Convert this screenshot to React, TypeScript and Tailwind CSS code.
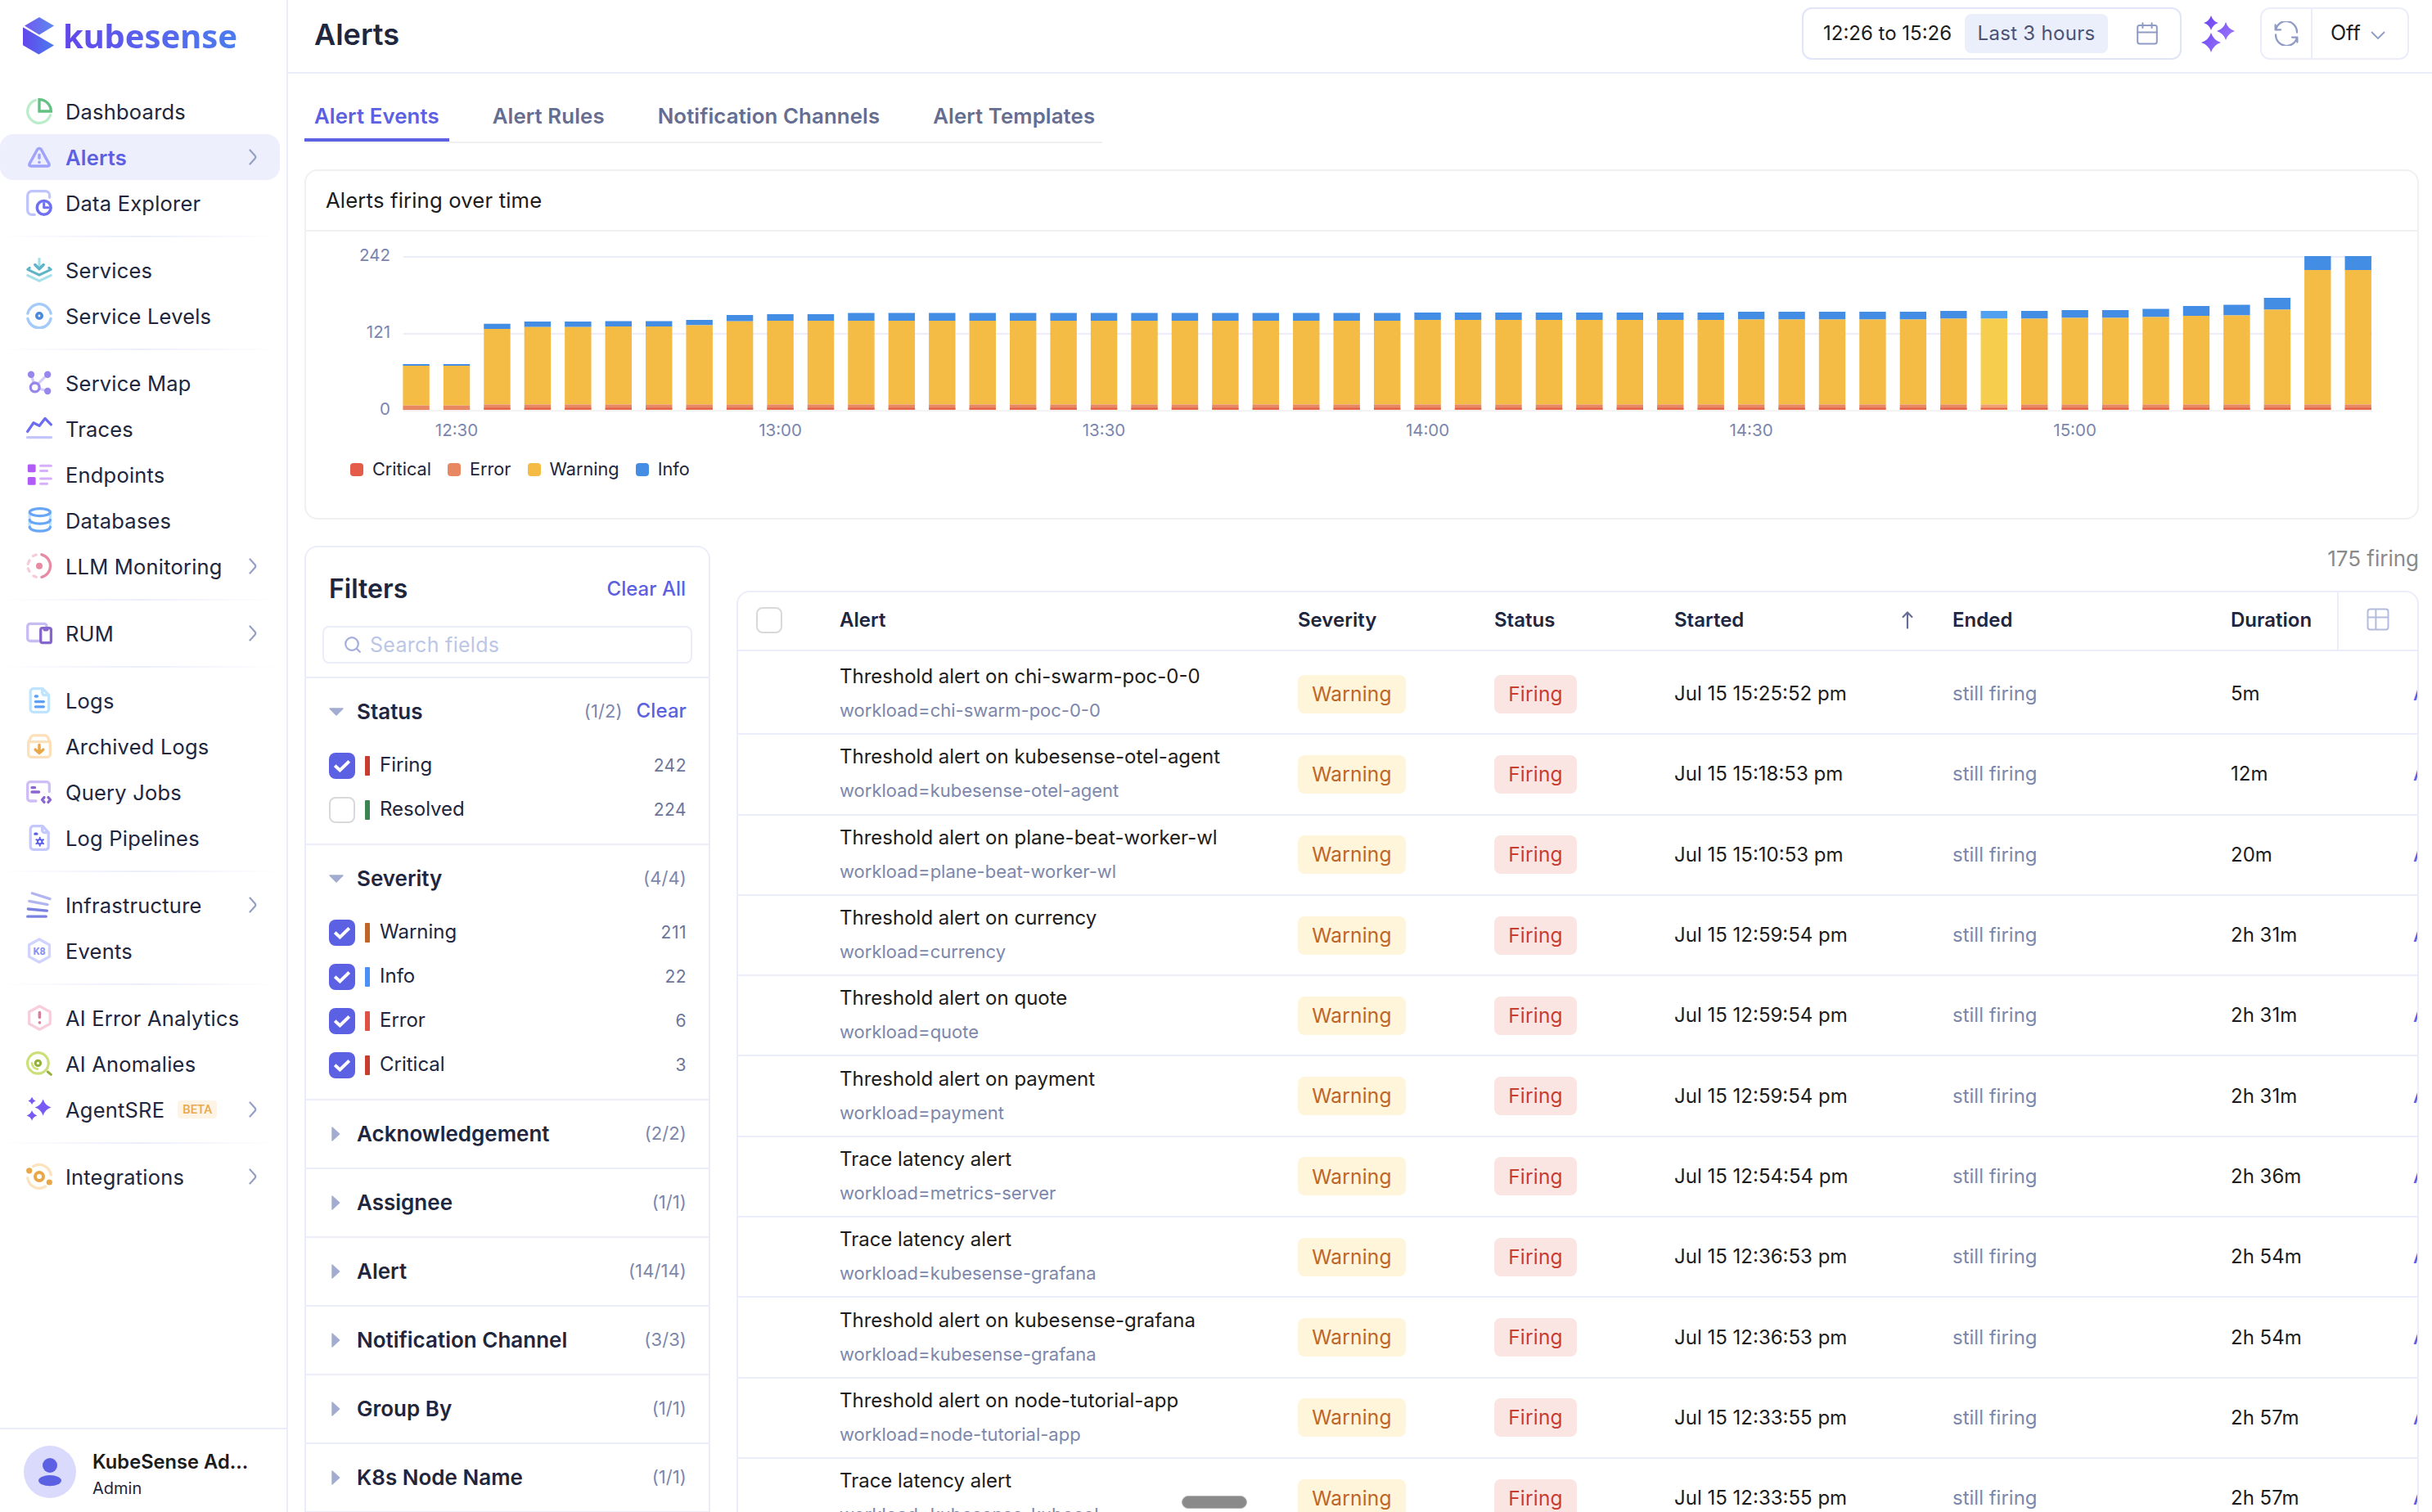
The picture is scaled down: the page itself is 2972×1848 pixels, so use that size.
import type { ReactNode } from "react";
import clsx from "clsx";

type NavItem = {
  label: string;
  icon: ReactNode;
  arrow?: boolean;
  active?: boolean;
  badge?: string;
};

/* ---------- icons ---------- */

function Glyph({ children }: { children: ReactNode }) {
  return (
    <svg
      viewBox="0 0 32 32"
      className="size-8 shrink-0"
      fill="none"
      strokeWidth={3.3}
      strokeLinecap="round"
      strokeLinejoin="round"
    >
      {children}
    </svg>
  );
}

const star = (x: number, y: number, r: number) => {
  const k = r * 0.24;
  return `M${x} ${y - r}Q${x + k} ${y - k} ${x + r} ${y}Q${x + k} ${y + k} ${x} ${y + r}Q${x - k} ${y + k} ${x - r} ${y}Q${x - k} ${y - k} ${x} ${y - r}Z`;
};

const icons = {
  dashboards: (
    <Glyph>
      <path d="M11.3 2.5A14.3 14.3 0 1 0 29.5 20.8" stroke="#bbedca" />
      <path d="M16 1.7V16H30.3A14.3 14.3 0 0 0 16 1.7Z" stroke="#62c083" strokeLinejoin="miter" />
    </Glyph>
  ),
  alerts: (
    <Glyph>
      <path
        d="M13.7 6.6 4 24.4C3.3 25.8 4 27 5.6 27H26.4C28 27 28.7 25.8 28 24.4L18.3 6.6C17.3 5 14.7 5 13.7 6.6Z"
        stroke="#9fa3fb"
        strokeWidth={3.4}
      />
      <path d="M16 13.3V17.3M16 22.3V22.4" stroke="#9fa3fb" strokeWidth={3.6} />
    </Glyph>
  ),
  explorer: (
    <Glyph>
      <path d="M10.3 30.3H7A5.3 5.3 0 0 1 1.7 25V7A5.3 5.3 0 0 1 7 1.7H23.3A5.3 5.3 0 0 1 28.6 7V9.3" stroke="#c0c4fd" />
      <circle cx="21.7" cy="21.8" r="8.4" stroke="#6e70f0" strokeWidth={3.5} />
      <path d="M21.7 16.5V21.8H27" stroke="#6e70f0" strokeWidth={3} />
    </Glyph>
  ),
  services: (
    <Glyph>
      <path d="M16 2.4V11" stroke="#a6e0ea" />
      <path d="M1.8 22.6 16 29.3 30.2 22.6" stroke="#a6e0ea" strokeWidth={3} />
      <path d="M10.8 9.6 16 14.8 21.2 9.6" stroke="#5eb5c8" strokeWidth={3.5} />
      <path d="M4.2 13.4 1.8 15.4 16 22.2 30.2 15.4 27.8 13.4" stroke="#5eb5c8" strokeWidth={3} />
    </Glyph>
  ),
  levels: (
    <Glyph>
      <path d="M1.9 13.2A14.4 14.4 0 0 1 30.1 13.2M1.9 19.4A14.4 14.4 0 0 0 30.1 19.4" stroke="#a3caf8" />
      <circle cx="16" cy="16" r="3.2" stroke="#4b89db" strokeWidth={3.6} />
    </Glyph>
  ),
  map: (
    <Glyph>
      <path d="M6 5.7 9 15M26 5.7 14.5 17.2M26 26 16 23" stroke="#d3cdfa" />
      <g fill="#9787ec">
        <circle cx="6" cy="5.8" r="4.2" />
        <circle cx="26.2" cy="5.8" r="4.2" />
        <circle cx="26.2" cy="26" r="4.2" />
      </g>
      <circle cx="10.7" cy="21.4" r="5.4" stroke="#9787ec" fill="#fff" />
    </Glyph>
  ),
  traces: (
    <Glyph>
      <path d="M1.7 19.4 9 8.8 16 12.4 23 3.4 30.3 10.8" stroke="#6c6df0" />
      <path d="M1.6 26.7H30.4" stroke="#c3c6fc" />
    </Glyph>
  ),
  endpoints: (
    <Glyph>
      <rect x="1.8" y="3.4" width="9.8" height="9.8" rx="1.6" fill="#b15cf7" />
      <rect x="1.8" y="19" width="9.8" height="9.8" rx="1.6" fill="#b15cf7" />
      <path d="M17.5 5.2H30.4M17.5 11.4H25.6M17.5 20.9H30.4M17.5 27.3H25.6" stroke="#d7aefb" strokeWidth={3} />
    </Glyph>
  ),
  databases: (
    <Glyph>
      <path d="M4.2 6V25M29.4 6V25" stroke="#c0e3fd" strokeLinecap="butt" />
      <ellipse cx="16.8" cy="6.1" rx="12.5" ry="4.5" stroke="#68a6f8" />
      <path d="M4.3 15.4C4.3 18 10 20.1 16.8 20.1S29.3 18 29.3 15.4M4.3 24.2C4.3 27 10 29.1 16.8 29.1S29.3 27 29.3 24.2" stroke="#68a6f8" />
    </Glyph>
  ),
  llm: (
    <Glyph>
      <path d="M19 1.8A14.3 14.3 0 0 1 19 29.4" stroke="#e78aa3" />
      <path d="M12.2 2 8.5 3.6M4 9 2.2 13.2M2.4 19 4 22.4M9 27.9 12.3 29.2" stroke="#f7ccd9" />
      <circle cx="16" cy="15.8" r="4" fill="#e78aa3" />
    </Glyph>
  ),
  rum: (
    <Glyph>
      <path d="M25 8V7.5A3.2 3.2 0 0 0 21.8 4.3H5A3.3 3.3 0 0 0 1.7 7.6V22.2A3.3 3.3 0 0 0 5 25.5H15" stroke="#c8bcf4" />
      <rect x="17.7" y="9.7" width="12.7" height="18" rx="2.4" stroke="#8566cc" fill="#fff" />
      <path d="M22.7 11.4H25.4" stroke="#8566cc" strokeWidth={4} />
    </Glyph>
  ),
  logs: (
    <Glyph>
      <path d="M20 1.7H9A3.6 3.6 0 0 0 5.2 5.3V26.7A3.6 3.6 0 0 0 9 30.3H24A3.6 3.6 0 0 0 27.6 26.7V9.4L20 1.7ZM19.6 2V6.6A3 3 0 0 0 22.6 9.6H27" stroke="#c0e4fd" />
      <path d="M11.4 11H13.4M11.4 17.6H21.4M11.4 23.8H21.4" stroke="#5c9ff6" />
    </Glyph>
  ),
  archived: (
    <Glyph>
      <path d="M3 10.4 6 4.6A3 3 0 0 1 8.6 2.8H23.4A3 3 0 0 1 26 4.6L29 10.4M2.7 10.6H29.3V26A3.3 3.3 0 0 1 26 29.3H6A3.3 3.3 0 0 1 2.7 26Z" stroke="#fce0b9" />
      <path d="M16 14.4V24M11.2 20.2 16 24.4 20.8 20.2" stroke="#e8a748" strokeWidth={3.5} />
    </Glyph>
  ),
  query: (
    <Glyph>
      <path d="M12 27H5A3.3 3.3 0 0 1 1.7 23.7V7A3.3 3.3 0 0 1 5 3.7H25A3.3 3.3 0 0 1 28.3 7V15.6" stroke="#cfbdf8" />
      <path d="M7 10.6H10.6M7 16H15.6" stroke="#8a66d0" />
      <path d="M22 22.6 19.5 25.5 22 28.4M27 22.6 29.5 25.5 27 28.4" stroke="#8a66d0" />
    </Glyph>
  ),
  pipelines: (
    <Glyph>
      <path d="M20 1.7H9A3.6 3.6 0 0 0 5.2 5.3V26.7A3.6 3.6 0 0 0 9 30.3H24A3.6 3.6 0 0 0 27.2 26.7V9.4L20 1.7ZM19.6 2V6.6A3 3 0 0 0 22.6 9.6H27" stroke="#c5c8fd" />
      <path d="M11 11.2H12.8" stroke="#5b5fe6" />
      <path d="M16.7 15.8V18M16.7 23.4V25.8M12.4 18.2 14.4 19.4M19 22 21 23.2M12.4 23.2 14.4 22M19 19.4 21 18.2" stroke="#5b5fe6" strokeWidth={2} />
      <circle cx="16.7" cy="20.8" r="2.8" stroke="#5b5fe6" strokeWidth={2} />
    </Glyph>
  ),
  infra: (
    <Glyph>
      <path d="M7.4 1.8 29 8.6M3.8 11.4 26 15.6" stroke="#b1b6f0" />
      <path d="M2.3 21 25.4 23.2M1.7 30.2H24.3" stroke="#7a82e2" />
    </Glyph>
  ),
  events: (
    <Glyph>
      <path d="M16 2 28.4 8.8V23.2L16 30 3.6 23.2V8.8Z" stroke="#cfd3fd" />
      <text x="16" y="20.6" fontSize="12.5" fontWeight="700" textAnchor="middle" fill="#8a90f3" className="font-['Roboto',sans-serif]">
        K8
      </text>
    </Glyph>
  ),
  aiError: (
    <Glyph>
      <path d="M16.4 1.8 29.2 8.8V23.2L16.4 30.2 3.6 23.2V8.8Z" stroke="#f7cedb" />
      <path d="M16.4 9.6V15.4M16.4 21.8V22" stroke="#e07a96" strokeWidth={3.6} />
    </Glyph>
  ),
  anomalies: (
    <Glyph>
      <circle cx="14.4" cy="15.4" r="12.8" stroke="#cbe07a" strokeWidth={3.2} />
      <path d="M7 15.4A7.4 7.4 0 0 0 14 22.6" stroke="#cbe07a" strokeWidth={2.6} />
      <circle cx="14.4" cy="15.4" r="3.2" stroke="#94b13d" strokeWidth={3} />
      <path d="M26.4 26 30.3 29.3" stroke="#94b13d" strokeWidth={3} />
    </Glyph>
  ),
  agent: (
    <Glyph>
      <path d={`${star(7, 5.4, 4.6)}${star(20.6, 13.6, 10)}${star(7, 23.4, 6.3)}`} fill="#7a5af5" />
    </Glyph>
  ),
  integrations: (
    <Glyph>
      <path d="M8.6 3.6A14.3 14.3 0 0 1 30.2 14M1.8 18A14.3 14.3 0 0 0 23.6 28" stroke="#fce2bd" />
      <circle cx="16" cy="16" r="5" stroke="#e8a748" strokeWidth={4} />
      <circle cx="3.7" cy="8.8" r="3.6" fill="#e8a748" />
      <circle cx="28.3" cy="23" r="3.6" fill="#e8a748" />
    </Glyph>
  ),
};

const navGroups: NavItem[][] = [
  [
    { label: "Dashboards", icon: icons.dashboards },
    { label: "Alerts", icon: icons.alerts, arrow: true, active: true },
    { label: "Data Explorer", icon: icons.explorer },
  ],
  [
    { label: "Services", icon: icons.services },
    { label: "Service Levels", icon: icons.levels },
  ],
  [
    { label: "Service Map", icon: icons.map },
    { label: "Traces", icon: icons.traces },
    { label: "Endpoints", icon: icons.endpoints },
    { label: "Databases", icon: icons.databases },
    { label: "LLM Monitoring", icon: icons.llm, arrow: true },
  ],
  [{ label: "RUM", icon: icons.rum, arrow: true }],
  [
    { label: "Logs", icon: icons.logs },
    { label: "Archived Logs", icon: icons.archived },
    { label: "Query Jobs", icon: icons.query },
    { label: "Log Pipelines", icon: icons.pipelines },
  ],
  [
    { label: "Infrastructure", icon: icons.infra, arrow: true },
    { label: "Events", icon: icons.events },
  ],
  [
    { label: "AI Error Analytics", icon: icons.aiError },
    { label: "AI Anomalies", icon: icons.anomalies },
    { label: "AgentSRE", icon: icons.agent, arrow: true, badge: "BETA" },
  ],
  [{ label: "Integrations", icon: icons.integrations, arrow: true }],
];

/* ---------- sidebar ---------- */

function Logo() {
  return (
    <div className="flex h-[108px] items-start gap-[11px] pl-7 pt-5">
      <svg viewBox="0 0 38 46" className="mt-px h-[46px] w-[38px]">
        <defs>
          <linearGradient id="logo" x1="0" x2="1">
            <stop offset="0" stopColor="#6246ec" />
            <stop offset="1" stopColor="#4a7cee" />
          </linearGradient>
        </defs>
        <path d="M2 10.4 20 0 38 10.6 20 21.4Z" fill="url(#logo)" opacity="0.9" />
        <path d="M0 12.2 38 34.6 19.4 45.4 0 34.2Z" fill="url(#logo)" />
      </svg>
      <span className="bg-gradient-to-r from-[#6246ec] to-[#4a7cee] bg-clip-text font-['Noto_Sans',sans-serif] text-[40px] leading-[48px] font-bold tracking-[-0.1px] text-transparent">
        kubesense
      </span>
    </div>
  );
}

function NavRow({ label, icon, arrow, active, badge }: NavItem) {
  return (
    <a
      href="#"
      className={clsx(
        "mr-2 flex h-14 items-center rounded-2xl pl-8 pr-7",
        active ? "bg-[#eeeffd] font-semibold text-[#5c60e2]" : "text-[#20263d]"
      )}
    >
      {icon}
      <span className="ml-4 whitespace-nowrap pt-[3px] text-[25.5px] tracking-[0.2px]">{label}</span>
      {badge && (
        <span className="ml-4 flex h-[22px] w-12 items-center justify-center rounded-sm bg-[#fef4e6] font-['Roboto',sans-serif] text-[15px] font-medium tracking-[-0.2px] text-[#e9a84c]">
          {badge}
        </span>
      )}
      {arrow && (
        <svg viewBox="0 0 10 20" className="ml-auto h-5 w-2.5" fill="none" stroke="#94a0c4" strokeWidth={2.2} strokeLinecap="round">
          <path d="M1.5 1.5 7.6 8.3Q9 10 7.6 11.7L1.5 18.5" />
        </svg>
      )}
    </a>
  );
}

function Sidebar() {
  return (
    <aside className="flex w-[352px] shrink-0 flex-col border-r-2 border-[#ebedfb]">
      <Logo />
      <nav className="flex-1">
        {navGroups.map((group, i) => (
          <div key={i}>
            {i > 0 && <div className="my-3 mr-2 h-0.5 bg-gradient-to-r from-transparent via-[#eceefb] to-transparent" />}
            {group.map((item) => (
              <NavRow key={item.label} {...item} />
            ))}
          </div>
        ))}
      </nav>
      <div className="flex h-[103px] items-start gap-5 border-t-2 border-[#ebedfb] pl-[29px] pt-5">
        <svg viewBox="0 0 64 64" className="size-16">
          <circle cx="32" cy="32" r="32" fill="#dadafc" />
          <circle cx="32" cy="24" r="9" fill="#5c60e2" />
          <ellipse cx="32" cy="42.6" rx="14" ry="6.6" fill="#5c60e2" />
        </svg>
        <div className="pt-1">
          <div className="text-[23.7px] leading-[32px] font-semibold text-[#1c1c1c]">KubeSense Ad...</div>
          <div className="text-[20px] leading-[32px] text-[#20263d]">Admin</div>
        </div>
      </div>
    </aside>
  );
}

/* ---------- top bar ---------- */

function TopBar() {
  return (
    <header className="flex h-[90px] shrink-0 items-start border-b-2 border-[#ebedfb] pl-8 pr-7 pt-[9px]">
      <h1 className="pt-px text-[36px] leading-[64px] font-semibold text-[#20263d]">Alerts</h1>
      <div className="ml-auto flex h-16 w-[464px] items-center rounded-xl border-2 border-[#e0e5f8] pl-6 pr-[27px]">
        <span className="w-[173px] whitespace-nowrap text-[24px] text-[#1c1c1c]">12:26 to 15:26</span>
        <span className="flex h-12 w-[175px] items-center justify-center rounded-lg bg-[#ebeefb] text-[24px] tracking-[0.3px] text-[#4b5375]">
          Last 3 hours
        </span>
        <svg viewBox="0 0 26 28" className="ml-auto h-7 w-[26px]" fill="none" stroke="#8f9bc4" strokeWidth={2} strokeLinecap="round">
          <rect x="1.2" y="4" width="23.6" height="22.4" rx="2.4" />
          <path d="M1.2 12.6H24.8M7.4 1.2V7M18.6 1.2V7" />
        </svg>
      </div>
      <svg viewBox="0 0 42 46" className="ml-6 mt-[9px] h-[46px] w-[42px]">
        <defs>
          <linearGradient id="spark" x1="0" x2="1" y1="0.2" y2="0.8">
            <stop offset="0" stopColor="#6c45ee" />
            <stop offset="1" stopColor="#9f7bff" />
          </linearGradient>
        </defs>
        <path d={`${star(12, 10, 9)}${star(30, 20, 11)}${star(12, 34, 12)}`} fill="url(#spark)" />
      </svg>
      <div className="ml-[30px] flex h-16 w-[182px] rounded-xl border-2 border-[#ebedfb]">
        <div className="flex w-[62px] items-center justify-center border-r-2 border-[#ebedfb]">
          <svg viewBox="0 0 30 30" className="size-[30px]" fill="none" stroke="#8f9bc4" strokeWidth={2.2} strokeLinecap="round" strokeLinejoin="round">
            <path d="M1.6 4.4V10.4H8M2 10A13.2 13.2 0 0 1 28 13.6M28.4 25.6V19.6H22M28 20A13.2 13.2 0 0 1 2 16.4" />
          </svg>
        </div>
        <div className="flex flex-1 items-center gap-3 pl-[22px] text-[25px] text-[#1c1c1c]">
          Off
          <svg viewBox="0 0 18 10" className="mt-1 h-2.5 w-[18px]" fill="none" stroke="#8f9bc4" strokeWidth={1.8}>
            <path d="M1 1 9 9 17 1" />
          </svg>
        </div>
      </div>
    </header>
  );
}

const tabs = ["Alert Events", "Alert Rules", "Notification Channels", "Alert Templates"];

function Tabs() {
  return (
    <div className="flex h-[65px] w-[975px] gap-[41px] border-b-2 border-[#f0f0f0]">
      {tabs.map((tab, i) => (
        <button
          key={tab}
          className={clsx(
            "h-[63px] whitespace-nowrap border-b-4 px-3 pt-[5px] text-[25.8px] font-semibold tracking-[0.1px]",
            i === 0 ? "border-[#5c60e2] text-[#5c60e2]" : "border-transparent text-[#656e91]"
          )}
        >
          {tab}
        </button>
      ))}
    </div>
  );
}

/* ---------- chart ---------- */

const BASE = 501;
const PITCH = 49.44;

// pixel position of the top of the stack and of the warning segment
const bars: [number, number][] = [
  [445, 447], [445, 447], [395.7, 402], [393, 399.7], [393, 399.7], [392.5, 399], [392.5, 399],
  [391, 397.5], [385, 392.7], [384, 392], [384, 392], [382.5, 392],
  ...Array.from({ length: 13 }, (): [number, number] => [382.5, 392]),
  ...Array.from({ length: 8 }, (): [number, number] => [382, 391]),
  ...Array.from({ length: 5 }, (): [number, number] => [381, 390.5]),
  [380, 389.5], [380, 389.5], [380, 389.5], [379, 388.5], [379, 388.5], [377.5, 387.5],
  [374, 386], [372.5, 385.5], [364, 378.5], [313, 330], [313, 330],
];

const ticks = ["12:30", "13:00", "13:30", "14:00", "14:30", "15:00"];

const legend = [
  { label: "Critical", color: "bg-[#e45b49]" },
  { label: "Error", color: "bg-[#e88862]" },
  { label: "Warning", color: "bg-[#f4bb45]" },
  { label: "Info", color: "bg-[#438ee4]" },
];

function AlertsChart() {
  return (
    <section className="h-[428px] rounded-2xl border-2 border-[#f0f0f0]">
      <h2 className="flex h-[74px] items-center border-b-2 border-[#f0f0f0] pl-6 text-[25.7px] tracking-[0.15px] text-[#1c1c1c]">
        Alerts firing over time
      </h2>
      <svg viewBox="374 283 2580 265" className="h-[265px] w-full">
        <path d="M493 314H2899M493 408H2899" stroke="#ebedfb" strokeWidth={2} />
        <path d="M493 502H2899" stroke="#f3f3f3" strokeWidth={2} />
        {bars.map(([top, warn], i) => {
          const x = 492.4 + i * PITCH;
          const short = i < 2;
          const err = short ? 495.6 : 494.4;
          const hot = i === 39;
          return (
            <g key={i}>
              <rect x={x} y={top} width={32.4} height={warn - top} fill={hot ? "#52a0f0" : "#438ee4"} />
              <rect x={x} y={warn} width={32.4} height={err - warn} fill={hot ? "#f6cd4c" : "#f4bb45"} />
              <rect x={x} y={err} width={32.4} height={BASE - err} fill={hot ? "#f0a070" : "#e88862"} />
              {!short && <rect x={x} y={498.6} width={32.4} height={1.6} fill="#e45b49" />}
            </g>
          );
        })}
        <g fontSize={20.5} fill="#7a86ae" className="font-['Inter',sans-serif]">
          <text x={477} y={319} textAnchor="end">242</text>
          <text x={477} y={413} textAnchor="end">121</text>
          <text x={477} y={507} textAnchor="end">0</text>
          {ticks.map((t, i) => (
            <text key={t} x={558 + i * 8 * PITCH} y={533} textAnchor="middle">
              {t}
            </text>
          ))}
        </g>
      </svg>
      <div className="flex gap-5 pl-[54px] pt-[11px]">
        {legend.map((l) => (
          <span key={l.label} className="flex items-center gap-[11px] text-[21.7px] leading-[28px] text-[#20263d]">
            <i className={clsx("mt-0.5 size-4 rounded", l.color)} />
            {l.label}
          </span>
        ))}
      </div>
    </section>
  );
}

/* ---------- filters ---------- */

type Option = { label: string; count: number; color: string; checked?: boolean };

const statusOptions: Option[] = [
  { label: "Firing", count: 242, color: "bg-[#c73d30]", checked: true },
  { label: "Resolved", count: 224, color: "bg-[#3a8551]" },
];

const severityOptions: Option[] = [
  { label: "Warning", count: 211, color: "bg-[#bf6627]", checked: true },
  { label: "Info", count: 22, color: "bg-[#4a90f5]", checked: true },
  { label: "Error", count: 6, color: "bg-[#dd5245]", checked: true },
  { label: "Critical", count: 3, color: "bg-[#c73d30]", checked: true },
];

const collapsed = [
  ["Acknowledgement", "(2/2)"],
  ["Assignee", "(1/1)"],
  ["Alert", "(14/14)"],
  ["Notification Channel", "(3/3)"],
  ["Group By", "(1/1)"],
  ["K8s Node Name", "(1/1)"],
];

function Checkbox({ checked }: { checked?: boolean }) {
  if (!checked) return <span className="size-8 shrink-0 rounded-lg border-2 border-[#d9d9d9] bg-white" />;
  return (
    <span className="flex size-8 shrink-0 items-center justify-center rounded-lg bg-[#5c60e2]">
      <svg viewBox="0 0 20 16" className="h-4 w-5" fill="none" stroke="#fff" strokeWidth={4}>
        <path d="M1.2 7.6 7.4 13.4 18.8 2.4" />
      </svg>
    </span>
  );
}

function SectionHead({ title, count, open, clear }: { title: string; count: string; open?: boolean; clear?: boolean }) {
  return (
    <div className={clsx("flex items-center pl-7 pr-[27px]", open ? "h-20 pt-0.5" : "h-[82px]")}>
      <svg viewBox="0 0 18 18" className="size-[18px]" fill="#a2acd1" stroke="#a2acd1" strokeWidth={1.4} strokeLinejoin="round">
        {open ? <path d="M1 5H17L9 13Z" /> : <path d="M4 1V17L12.6 9Z" />}
      </svg>
      <span className="ml-4 pb-0.5 text-[26px] font-semibold text-[#20263d]">{title}</span>
      <span className="ml-auto pb-0.5 text-[22px] tracking-[0.1px] text-[#7c87ac]">{count}</span>
      {clear && <span className="ml-[17px] pb-0.5 text-[24px] font-medium tracking-[0.1px] text-[#5c60e2]">Clear</span>}
    </div>
  );
}

function OptionRow({ label, count, color, checked }: Option) {
  return (
    <label className="flex h-[54px] items-center pl-7 pr-[27px]">
      <Checkbox checked={checked} />
      <i className={clsx("ml-3 h-6 w-1.5 rounded-[1px]", color)} />
      <span className="ml-3 pb-0.5 text-[24px] text-[#20263d]">{label}</span>
      <span className="ml-auto text-[21px] tracking-[0.5px] text-[#6c769b]">{count}</span>
    </label>
  );
}

function Filters() {
  return (
    <section className="flex h-[1200px] w-[496px] shrink-0 flex-col rounded-t-2xl border-2 border-[#ebedfb]">
      <div className="flex h-24 items-center justify-between pl-7 pr-7 pt-[5px]">
        <h2 className="text-[32px] font-semibold text-[#20263d]">Filters</h2>
        <span className="text-[24px] font-medium text-[#5c60e2]">Clear All</span>
      </div>
      <div className="mx-5 mb-4 flex h-[46px] shrink-0 items-center rounded-lg border-2 border-[#ebedfb] pl-[25px]">
        <svg viewBox="0 0 20 20" className="size-5" fill="none" stroke="#a3aedb" strokeWidth={2.2} strokeLinecap="round">
          <circle cx="9" cy="9" r="7.8" />
          <path d="M14.8 14.8 18.8 18.8" />
        </svg>
        <span className="ml-[11px] pt-0.5 text-[25px] tracking-[0.3px] text-[#bcc6e6]">Search fields</span>
      </div>
      <div className="border-y-2 border-[#ebedfb] pb-3.5">
        <SectionHead title="Status" count="(1/2)" open clear />
        {statusOptions.map((o) => (
          <OptionRow key={o.label} {...o} />
        ))}
      </div>
      <div className="border-b-2 border-[#ebedfb] pb-3.5">
        <SectionHead title="Severity" count="(4/4)" open />
        {severityOptions.map((o) => (
          <OptionRow key={o.label} {...o} />
        ))}
      </div>
      {collapsed.map(([title, count]) => (
        <div key={title} className="border-b-2 border-[#ebedfb]">
          <SectionHead title={title} count={count} />
        </div>
      ))}
    </section>
  );
}

/* ---------- table ---------- */

const alerts = [
  ["Threshold alert on chi-swarm-poc-0-0", "chi-swarm-poc-0-0", "15:25:52", "5m"],
  ["Threshold alert on kubesense-otel-agent", "kubesense-otel-agent", "15:18:53", "12m"],
  ["Threshold alert on plane-beat-worker-wl", "plane-beat-worker-wl", "15:10:53", "20m"],
  ["Threshold alert on currency", "currency", "12:59:54", "2h 31m"],
  ["Threshold alert on quote", "quote", "12:59:54", "2h 31m"],
  ["Threshold alert on payment", "payment", "12:59:54", "2h 31m"],
  ["Trace latency alert", "metrics-server", "12:54:54", "2h 36m"],
  ["Trace latency alert", "kubesense-grafana", "12:36:53", "2h 54m"],
  ["Threshold alert on kubesense-grafana", "kubesense-grafana", "12:36:53", "2h 54m"],
  ["Threshold alert on node-tutorial-app", "node-tutorial-app", "12:33:55", "2h 57m"],
  ["Trace latency alert", "kubesense-kubecol", "12:33:55", "2h 57m"],
];

const columns = "grid grid-cols-[124px_560px_240px_220px_340px_340px_223px_1fr]";

function AlertsTable() {
  return (
    <section className="h-[1200px] flex-1 overflow-hidden rounded-t-2xl border-2 border-[#ebedfb]">
      <div className={clsx(columns, "h-[72px] items-center border-b-2 border-[#ebedfb] pb-0.5 text-[24px] font-semibold text-[#20263d]")}>
        <span className="flex pl-[22px]">
          <Checkbox />
        </span>
        <span>Alert</span>
        <span>Severity</span>
        <span>Status</span>
        <span className="flex items-center justify-between pr-[48px]">
          Started
          <svg viewBox="0 0 14 22" className="h-[22px] w-3.5" fill="none" stroke="#656e91" strokeWidth={2.2} strokeLinecap="round" strokeLinejoin="round">
            <path d="M7 20.6V1.6M1.6 7 7 1.4 12.4 7" />
          </svg>
        </span>
        <span>Ended</span>
        <span>Duration</span>
        <span className="-mb-0.5 -ml-[93px] flex h-[70px] items-center justify-center border-l-2 border-[#ebedfb] pb-1">
          <svg viewBox="0 0 28 28" className="size-7" fill="none" stroke="#b3bcdc" strokeWidth={2}>
            <rect x="1.5" y="1.5" width="25" height="25" rx="3" />
            <path d="M1.5 11.6H26.5M11.4 1.5V26.5" />
          </svg>
        </span>
      </div>
      <div className="pt-1">
        {alerts.map(([title, workload, time, duration], i) => (
          <div key={i} className={clsx(columns, "h-[98.3px] items-center border-b-2 border-[#ebedfb] text-[24px] text-[#1c1c1c]")}>
            <span />
            <div>
              <div className="leading-[40px]">{title}</div>
              <div className="text-[22px] leading-[42px] text-[#7c87ac]">workload={workload}</div>
            </div>
            <span>
              <em className="flex h-[47px] w-[132px] items-center justify-center rounded-lg bg-[#fef5db] text-[24.5px] not-italic tracking-[0.2px] text-[#bf6627]">
                Warning
              </em>
            </span>
            <span>
              <em className="flex h-[47px] w-[101px] items-center justify-center rounded-lg bg-[#fbe5e3] text-[24.5px] not-italic tracking-[0.2px] text-[#c73d30]">
                Firing
              </em>
            </span>
            <span>Jul 15 {time} pm</span>
            <span className="text-[#7c87ac]">still firing</span>
            <span>{duration}</span>
            <span className="w-0 whitespace-nowrap font-medium text-[#5c60e2]">Acknowledge</span>
          </div>
        ))}
      </div>
    </section>
  );
}

export default function App() {
  return (
    <div className="relative flex h-[1848px] w-[2972px] overflow-hidden bg-white font-['Inter',sans-serif]">
      <Sidebar />
      <main className="flex min-w-0 flex-1 flex-col">
        <TopBar />
        <div className="px-5 pr-4 pt-5">
          <Tabs />
          <div className="h-8" />
          <AlertsChart />
          <div className="mt-8 flex gap-8">
            <Filters />
            <div className="flex min-w-0 flex-1 flex-col">
              <div className="h-[55px] text-right text-[26px] leading-[32px] text-[#8a8a8a]">175 firing</div>
              <AlertsTable />
            </div>
          </div>
        </div>
      </main>
      <div className="absolute left-[1444px] top-[1828px] h-4 w-20 rounded-full border border-[#b5b5b5] bg-[#8a8a8a]" />
    </div>
  );
}
